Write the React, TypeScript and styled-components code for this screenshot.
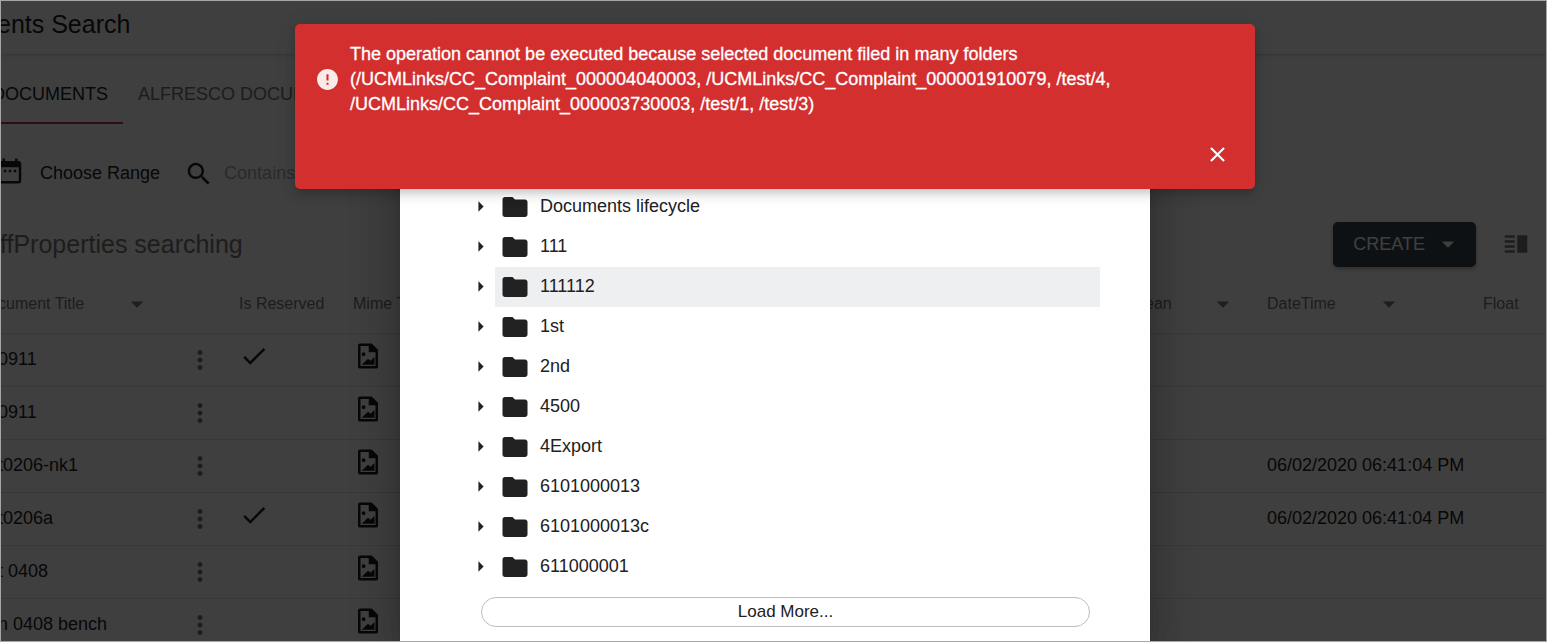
import React from "react";
import styled, { createGlobalStyle } from "styled-components";

const GlobalStyle = createGlobalStyle`
  *, *::before, *::after { box-sizing: border-box; }
  body { margin: 0; font-family: "Liberation Sans", Arial, sans-serif; font-size: 18px; color: #212121; }
  button, input { font: inherit; color: inherit; }
`;

const Frame = styled.div`
  position: relative;
  height: 100vh;
  overflow: hidden;
  border: 1px solid #a6a6a6;
  background: #fafafa;
`;

const AppBar = styled.header`
  display: flex;
  align-items: center;
  height: 53px;
  padding-bottom: 6px;
  box-shadow: 0 1px 4px rgba(0, 0, 0, 0.2);
`;

const AppTitle = styled.h1`
  margin: 0 0 0 -4px;
  font-size: 25px;
  font-weight: 400;
`;

const Tabs = styled.nav`
  display: flex;
  height: 70px;
`;

const Tab = styled.a<{ $active?: boolean }>`
  display: flex;
  align-items: center;
  justify-content: flex-end;
  flex: none;
  width: ${(p) => (p.$active ? "122px" : "auto")};
  padding: 12px 15px 0;
  border-bottom: 2px solid ${(p) => (p.$active ? "#b9384f" : "transparent")};
  color: ${(p) => (p.$active ? "#212121" : "#757575")};
  white-space: nowrap;
  text-decoration: none;
`;

const Filters = styled.div`
  display: flex;
  align-items: center;
  height: 97px;
  padding-top: 2px;
`;

const PlainButton = styled.button`
  display: inline-flex;
  align-items: center;
  padding: 0;
  border: 0;
  background: none;
  cursor: pointer;
`;

const RangeButton = styled(PlainButton)`
  gap: 15px;
  margin: 0 24px 0 -6px;
`;

const RaisedIcon = styled.span`
  display: flex;
  padding-bottom: 5px;
`;

const SearchLabel = styled.label`
  display: flex;
  align-items: center;
  gap: 10px;
`;

const SearchInput = styled.input`
  width: 200px;
  padding: 0;
  border: 0;
  background: none;
  &::placeholder { color: #a8a8a8; opacity: 1; }
`;

const Toolbar = styled.div`
  display: flex;
  align-items: center;
  gap: 25px;
  height: 46px;
  padding-right: 15px;
`;

const Heading = styled.h2`
  flex: 1;
  margin: 0 0 0 -1px;
  font-size: 25px;
  font-weight: 400;
  color: #757575;
`;

const CreateButton = styled.button`
  display: flex;
  align-items: center;
  gap: 8px;
  height: 45px;
  padding: 0 13px 0 20px;
  border: 0;
  border-radius: 5px;
  background: #364550;
  color: #fafafa;
  box-shadow: 0 2px 4px rgba(0, 0, 0, 0.3);
`;

const Table = styled.table`
  width: calc(100% + 3px);
  margin-left: -3px;
  table-layout: fixed;
  border-collapse: collapse;
`;

const Col = styled.col<{ $w?: number }>`
  width: ${(p) => (p.$w ? p.$w + "px" : "auto")};
`;

const Th = styled.th`
  height: 66px;
  padding: 8px 0 0;
  border-bottom: 1px solid #e0e0e0;
  font-size: 16px;
  font-weight: 400;
  text-align: left;
  white-space: nowrap;
  color: #757575;
`;

const SortLabel = styled.div<{ $w: number }>`
  display: flex;
  align-items: center;
  justify-content: space-between;
  width: ${(p) => p.$w}px;
`;

const Td = styled.td`
  height: 53px;
  padding: 0;
  border-bottom: 1px solid #e0e0e0;
  white-space: nowrap;
`;

const IconCell = styled.div`
  display: flex;
  padding-bottom: 7px;
`;

const MenuButton = styled(PlainButton)`
  display: flex;
  margin-left: 17px;
`;

const Overlay = styled.div`
  position: absolute;
  inset: 0;
  display: flex;
  justify-content: center;
  padding: 60px 0 0 3px;
  background: rgba(0, 0, 0, 0.75);
`;

const Dialog = styled.section`
  width: 750px;
  padding: 126px 50px 0 75px;
  background: #fff;
  box-shadow: 0 11px 15px -7px rgba(0, 0, 0, 0.2), 0 24px 38px 3px rgba(0, 0, 0, 0.14),
    0 9px 46px 8px rgba(0, 0, 0, 0.12);
`;

const Tree = styled.ul`
  margin: 0;
  padding: 0;
  list-style: none;
`;

const TreeItem = styled.li`
  display: flex;
  align-items: stretch;
  height: 40px;
`;

const Toggle = styled(PlainButton)`
  width: 27px;
  margin-left: -7px;
  padding-bottom: 1px;
`;

const Folder = styled(PlainButton)<{ $selected?: boolean }>`
  flex: 1;
  gap: 10px;
  padding-left: 5px;
  background: ${(p) => (p.$selected ? "#eeeff1" : "none")};
`;

const FolderName = styled.span`
  padding-bottom: 1px;
`;

const LoadMore = styled.button`
  display: block;
  width: calc(100% - 16px);
  height: 30px;
  margin: 10px 0 0 6px;
  padding: 0;
  border: 1px solid #bdbdbd;
  border-radius: 15px;
  background: #fff;
  font-size: 17px;
  line-height: 26px;
`;

const ToastLayer = styled.div`
  position: absolute;
  inset: 23px 0 auto;
  display: flex;
  justify-content: center;
  padding-left: 3px;
`;

const Toast = styled.div`
  display: flex;
  flex-direction: column;
  gap: 17px;
  width: 960px;
  padding: 18px 18px 15px 20px;
  border-radius: 5px;
  background: #d32f2f;
  color: #fff;
  box-shadow: 0 4px 6px -1px rgba(0, 0, 0, 0.12), 0 7px 12px rgba(0, 0, 0, 0.08), 0 1px 22px rgba(0, 0, 0, 0.08);
`;

const Message = styled.div`
  display: flex;
  align-items: center;
  gap: 10px;
`;

const MessageText = styled.p`
  max-width: 800px;
  margin: 0;
  line-height: 25px;
  -webkit-text-stroke: 0.3px #fff;
`;

const CloseButton = styled(PlainButton)`
  align-self: flex-end;
  justify-content: center;
  width: 40px;
  height: 40px;
`;

const Icon = ({ d, size = 30, color = "#212121" }: { d: string; size?: number; color?: string }) => (
  <svg width={size} height={size} viewBox="0 0 24 24" fill={color} aria-hidden="true">
    <path d={d} fillRule="evenodd" />
  </svg>
);

const icons = {
  calendar:
    "M9 11H7v2h2v-2zm4 0h-2v2h2v-2zm4 0h-2v2h2v-2zm2-7h-1V2h-2v2H8V2H6v2H5c-1.1 0-2 .9-2 2v14c0 1.1.9 2 2 2h14c1.1 0 2-.9 2-2V6c0-1.1-.9-2-2-2zm0 16H5V9h14v11z",
  search:
    "M15.5 14h-.79l-.28-.27C15.41 12.59 16 11.11 16 9.5 16 5.91 13.09 3 9.5 3S3 5.91 3 9.5 5.91 16 9.5 16c1.61 0 3.09-.59 4.23-1.57l.27.28v.79l5 4.99L20.49 19l-4.99-5zm-6 0C7.01 14 5 11.99 5 9.5S7.01 5 9.5 5 14 7.01 14 9.5 11.99 14 9.5 14z",
  down: "M7 10l5 5 5-5z",
  right: "M10 17l5-5-5-5z",
  check: "M9 16.17L4.83 12l-1.42 1.41L9 19 21 7l-1.41-1.41z",
  more: "M12 8c1.1 0 2-.9 2-2s-.9-2-2-2-2 .9-2 2 .9 2 2 2zm0 2c-1.1 0-2 .9-2 2s.9 2 2 2 2-.9 2-2-.9-2-2-2zm0 6c-1.1 0-2 .9-2 2s.9 2 2 2 2-.9 2-2-.9-2-2-2z",
  image:
    "M15 2H5.5C4.7 2 4 2.7 4 3.5v17c0 .8.7 1.5 1.5 1.5h13c.8 0 1.5-.7 1.5-1.5V7l-5-5zM6 20V4h6.6v5H18v11H6zM8.5 9a1.5 1.5 0 1 0 0 3 1.5 1.5 0 0 0 0-3zM7 19h10.2v-6.2l-3.2 3-2-1.6z",
  folder: "M10 4H4c-1.1 0-1.99.9-1.99 2L2 18c0 1.1.9 2 2 2h16c1.1 0 2-.9 2-2V8c0-1.1-.9-2-2-2h-8l-2-2z",
  error: "M12 2C6.48 2 2 6.48 2 12s4.48 10 10 10 10-4.48 10-10S17.52 2 12 2zm1 15h-2v-2h2v2zm0-4h-2V7h2v6z",
  close: "M19 6.41L17.59 5 12 10.59 6.41 5 5 6.41 10.59 12 5 17.59 6.41 19 12 13.41 17.59 19 19 17.59 13.41 12z",
  columns: "M3 15h8v-2H3v2zm0 4h8v-2H3v2zm0-8h8V9H3v2zm0-6v2h8V5H3zm10 0h8v14h-8V5z",
};

const rows = [
  { title: "0911", reserved: true, date: "" },
  { title: "0911", reserved: false, date: "" },
  { title: "t0206-nk1", reserved: false, date: "06/02/2020 06:41:04 PM" },
  { title: "t0206a", reserved: true, date: "06/02/2020 06:41:04 PM" },
  { title: "t 0408", reserved: false, date: "" },
  { title: "n 0408 bench", reserved: false, date: "" },
];

const folders = [
  "Documents lifecycle",
  "111",
  "111112",
  "1st",
  "2nd",
  "4500",
  "4Export",
  "6101000013",
  "6101000013c",
  "611000001",
];

export default function App() {
  return (
    <>
      <GlobalStyle />
      <Frame>
        <AppBar>
          <AppTitle>ents Search</AppTitle>
        </AppBar>
        <Tabs>
          <Tab href="#documents" $active>
            DOCUMENTS
          </Tab>
          <Tab href="#alfresco">ALFRESCO DOCUMENTS</Tab>
        </Tabs>
        <Filters>
          <RangeButton>
            <RaisedIcon>
              <Icon d={icons.calendar} />
            </RaisedIcon>
            Choose Range
          </RangeButton>
          <SearchLabel aria-label="Contains">
            <Icon d={icons.search} />
            <SearchInput type="text" placeholder="Contains" />
          </SearchLabel>
        </Filters>
        <Toolbar>
          <Heading>ffProperties searching</Heading>
          <CreateButton>
            CREATE
            <Icon d={icons.down} color="#fafafa" />
          </CreateButton>
          <PlainButton aria-label="Columns">
            <Icon d={icons.columns} color="#757575" />
          </PlainButton>
        </Toolbar>
        <Table>
          <colgroup>
            <Col $w={170} />
            <Col $w={71} />
            <Col $w={114} />
            <Col $w={114} />
            <Col />
            <Col $w={154} />
            <Col $w={216} />
            <Col $w={63} />
          </colgroup>
          <thead>
            <tr>
              <Th>
                <SortLabel $w={154}>
                  cument Title
                  <Icon d={icons.down} color="#757575" />
                </SortLabel>
              </Th>
              <Th />
              <Th>Is Reserved</Th>
              <Th>Mime Type</Th>
              <Th />
              <Th>
                <SortLabel $w={125}>
                  Boolean
                  <Icon d={icons.down} color="#757575" />
                </SortLabel>
              </Th>
              <Th>
                <SortLabel $w={137}>
                  DateTime
                  <Icon d={icons.down} color="#757575" />
                </SortLabel>
              </Th>
              <Th>Float</Th>
            </tr>
          </thead>
          <tbody>
            {rows.map((row, i) => (
              <tr key={i}>
                <Td>{row.title}</Td>
                <Td>
                  <MenuButton aria-label="Row actions">
                    <Icon d={icons.more} color="#757575" />
                  </MenuButton>
                </Td>
                <Td>
                  <IconCell>{row.reserved && <Icon d={icons.check} />}</IconCell>
                </Td>
                <Td>
                  <IconCell>
                    <Icon d={icons.image} />
                  </IconCell>
                </Td>
                <Td />
                <Td />
                <Td>{row.date}</Td>
                <Td />
              </tr>
            ))}
          </tbody>
        </Table>
        <Overlay>
          <Dialog role="dialog" aria-label="Choose folder">
            <Tree>
              {folders.map((name) => (
                <TreeItem key={name}>
                  <Toggle aria-label={"Expand " + name}>
                    <Icon d={icons.right} size={25} />
                  </Toggle>
                  <Folder $selected={name === "111112"}>
                    <Icon d={icons.folder} />
                    <FolderName>{name}</FolderName>
                  </Folder>
                </TreeItem>
              ))}
            </Tree>
            <LoadMore>Load More...</LoadMore>
          </Dialog>
        </Overlay>
        <ToastLayer>
          <Toast role="alert">
            <Message>
              <Icon d={icons.error} size={25} color="rgba(255, 255, 255, 0.9)" />
              <MessageText>
                The operation cannot be executed because selected document filed in many folders
                (/UCMLinks/CC_Complaint_000004040003, /UCMLinks/CC_Complaint_000001910079, /test/4,
                /UCMLinks/CC_Complaint_000003730003, /test/1, /test/3)
              </MessageText>
            </Message>
            <CloseButton aria-label="Close">
              <Icon d={icons.close} size={25} color="#fff" />
            </CloseButton>
          </Toast>
        </ToastLayer>
      </Frame>
    </>
  );
}
